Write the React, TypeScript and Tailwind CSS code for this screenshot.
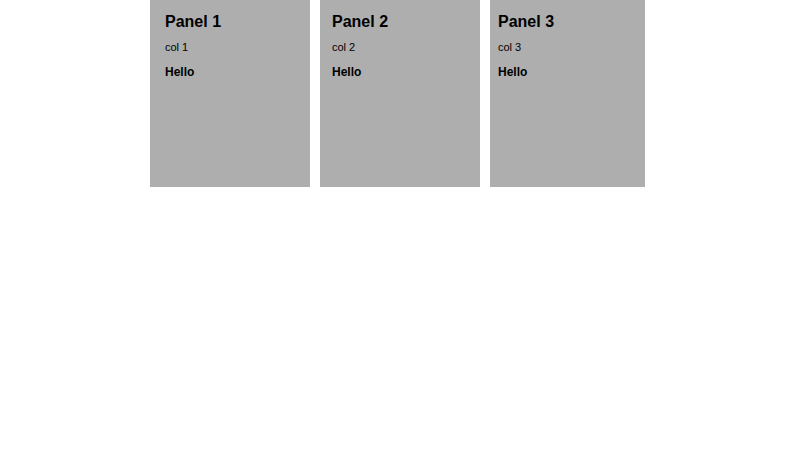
const panels = [
  { title: "Panel 1", col: "col 1", width: "w-[160px]", pad: "pl-[15px]" },
  { title: "Panel 2", col: "col 2", width: "w-[160px]", pad: "pl-[12px]" },
  { title: "Panel 3", col: "col 3", width: "w-[155px]", pad: "pl-[8px]" },
];

export default function App() {
  return (
    <div className="w-[800px] h-[450px] bg-white font-['Liberation_Sans',Arial,sans-serif] text-black">
      <div className="flex gap-[10px] ml-[150px]">
        {panels.map((p) => (
          <div key={p.title} className={`${p.width} ${p.pad} h-[187px] bg-[#aeaeae] pt-[10px] flex flex-col`}>
            <h2 className="text-[16px] leading-[24px] font-bold">{p.title}</h2>
            <p className="text-[11px] leading-[16px] mt-[5px]">{p.col}</p>
            <p className="text-[12px] leading-[16px] mt-[9px] font-bold">Hello</p>
          </div>
        ))}
      </div>
    </div>
  );
}
